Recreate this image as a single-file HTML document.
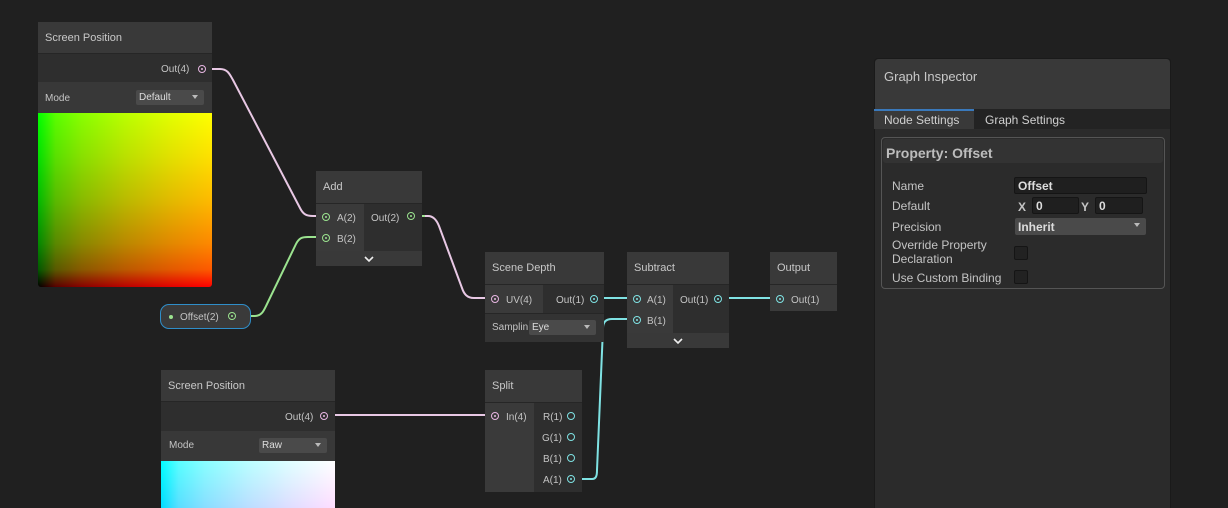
<!DOCTYPE html>
<html><head><style>
html{overflow:hidden}
body{margin:0;width:1228px;height:508px;background:#202020;overflow:hidden;position:relative;font-family:"Liberation Sans",sans-serif;font-size:11px;color:#c4c4c4}
.a{position:absolute;box-sizing:border-box}
.h{background:#393939;color:#c8c8c8;padding-left:7px;display:flex;align-items:center;font-size:11px}
.b{background:#2e2e2e}
.l{background:#3a3a3a}
.t{position:absolute;font-size:10px;color:#c4c4c4;white-space:nowrap;margin-top:1px}
.dd{position:absolute;background:#4a4a4a;border-radius:2px;font-size:10px;color:#ddd;padding-left:3px;box-sizing:border-box;line-height:14px}
.dd:after{content:"";position:absolute;right:6px;top:5px;border:3.5px solid transparent;border-top:4px solid #bbb}
.p{position:absolute;width:8px;height:8px;border-radius:50%;box-sizing:border-box;border:1.5px solid;margin-top:1px}
.p.f:after{content:"";position:absolute;left:1.5px;top:1.5px;width:2px;height:2px;border-radius:50%;background:currentColor}
.pk{border-color:#e7b6e2;color:#e7b6e2}.gr{border-color:#9be38f;color:#9be38f}.cy{border-color:#7fe2e3;color:#7fe2e3}
.chev{position:absolute;background:#393939}
.rx{background:linear-gradient(to right,#000 0%,#590000 10%,#880000 25%,#ba0000 50%,#e00000 75%,#f00 100%)}
.gy{background:linear-gradient(to top,#000 0%,#005900 10%,#008800 25%,#00ba00 50%,#00e000 75%,#0f0 100%);background-size:174px 174px;background-repeat:no-repeat;mix-blend-mode:screen}
.rxb{background:linear-gradient(to right,#0000ff 0%,#5900ff 10%,#8800ff 25%,#ba00ff 50%,#e000ff 75%,#f0f 100%)}
</style></head><body>
<svg class="a" style="left:0;top:0" width="1228" height="508">
<g fill="none" stroke-width="2">
<path d="M205 69 H220 C228 69 230 75 233 80 L300 208 C303 214 306 216 313 216 H320" stroke="#e8c8e4"/>
<path d="M250 316 H255 C262 316 264 310 267 304 L296 244 C299 238 302 237 308 237 H320" stroke="#9be38f"/>
<path d="M414 216 H428 C434 216 437 221 439 226 L462 288 C464 294 467 298 474 298 H490" stroke="#e8c8e4"/>
<path d="M414 216 H425" stroke="#9be38f"/>
<path d="M596 298 H632" stroke="#7fe2e3"/>
<path d="M720 298 H776" stroke="#7fe2e3"/>
<path d="M575 479 H592 C596 479 597 476 597 470 L603 328 C603 322 606 319 612 319 H632" stroke="#7fe2e3"/>
<path d="M327 415 H490" stroke="#e8c8e4"/>
</g></svg>

<!-- Screen Position 1 -->
<div class="a h" style="left:38px;top:22px;width:174px;height:31px">Screen Position</div>
<div class="a b" style="left:38px;top:53px;width:174px;height:29px;border-top:1px solid #262626"></div>
<div class="t" style="left:161px;top:63px">Out(4)</div>
<div class="p pk f" style="left:198px;top:64px"></div>
<div class="a" style="left:38px;top:82px;width:174px;height:31px;background:#383838"></div>
<div class="t" style="left:45px;top:92px">Mode</div>
<div class="dd" style="left:136px;top:90px;width:68px;height:15px;line-height:15px">Default</div>
<div class="a rx" style="left:38px;top:113px;width:174px;height:174px;border-radius:0 0 3px 3px;overflow:hidden">
<div class="a gy" style="left:0;top:0;width:174px;height:174px"></div></div>

<!-- Add -->
<div class="a h" style="left:316px;top:171px;width:106px;height:32px">Add</div>
<div class="a l" style="left:316px;top:203px;width:48px;height:48px;border-top:1px solid #262626"></div>
<div class="a b" style="left:364px;top:203px;width:58px;height:48px;border-top:1px solid #262626"></div>
<div class="p gr f" style="left:322px;top:212px"></div><div class="t" style="left:337px;top:212px">A(2)</div>
<div class="p gr f" style="left:322px;top:233px"></div><div class="t" style="left:337px;top:233px">B(2)</div>
<div class="t" style="left:371px;top:212px">Out(2)</div><div class="p gr f" style="left:407px;top:211px"></div>
<div class="chev" style="left:316px;top:251px;width:106px;height:15px"><svg width="106" height="15"><path d="M49 6 L53 10 L57 6" fill="none" stroke="#eee" stroke-width="1.6"/></svg></div>

<!-- Offset pill -->
<div class="a" style="left:160px;top:304px;width:91px;height:25px;border:1px solid #2f8ec9;border-radius:9px;background:#3a3a3a"></div>
<div class="a" style="left:169px;top:315px;width:4px;height:4px;border-radius:50%;background:#9be38f"></div>
<div class="t" style="left:180px;top:311px">Offset(2)</div>
<div class="p gr f" style="left:228px;top:311px"></div>

<!-- Scene Depth -->
<div class="a h" style="left:485px;top:252px;width:119px;height:32px">Scene Depth</div>
<div class="a l" style="left:485px;top:284px;width:58px;height:29px;border-top:1px solid #262626"></div>
<div class="a b" style="left:543px;top:284px;width:61px;height:29px;border-top:1px solid #262626"></div>
<div class="p pk f" style="left:491px;top:294px"></div><div class="t" style="left:506px;top:294px">UV(4)</div>
<div class="t" style="left:556px;top:294px">Out(1)</div><div class="p cy f" style="left:590px;top:294px"></div>
<div class="a" style="left:485px;top:313px;width:119px;height:29px;background:#333;border-top:1px solid #262626"></div>
<div class="t" style="left:492px;top:321px">Samplin</div>
<div class="dd" style="left:529px;top:320px;width:67px;height:15px;line-height:15px">Eye</div>

<!-- Subtract -->
<div class="a h" style="left:627px;top:252px;width:102px;height:32px">Subtract</div>
<div class="a l" style="left:627px;top:284px;width:46px;height:49px;border-top:1px solid #262626"></div>
<div class="a b" style="left:673px;top:284px;width:56px;height:49px;border-top:1px solid #262626"></div>
<div class="p cy f" style="left:633px;top:294px"></div><div class="t" style="left:647px;top:294px">A(1)</div>
<div class="p cy f" style="left:633px;top:315px"></div><div class="t" style="left:647px;top:315px">B(1)</div>
<div class="t" style="left:680px;top:294px">Out(1)</div><div class="p cy f" style="left:714px;top:294px"></div>
<div class="chev" style="left:627px;top:333px;width:102px;height:15px"><svg width="102" height="15"><path d="M47 6 L51 10 L55 6" fill="none" stroke="#eee" stroke-width="1.6"/></svg></div>

<!-- Output -->
<div class="a h" style="left:770px;top:252px;width:67px;height:32px">Output</div>
<div class="a l" style="left:770px;top:284px;width:67px;height:27px;border-top:1px solid #262626"></div>
<div class="p cy f" style="left:776px;top:294px"></div><div class="t" style="left:791px;top:294px">Out(1)</div>

<!-- Screen Position 2 -->
<div class="a h" style="left:161px;top:370px;width:174px;height:31px">Screen Position</div>
<div class="a b" style="left:161px;top:401px;width:174px;height:30px;border-top:1px solid #262626"></div>
<div class="t" style="left:285px;top:411px">Out(4)</div>
<div class="p pk f" style="left:320px;top:411px"></div>
<div class="a" style="left:161px;top:431px;width:174px;height:30px;background:#383838"></div>
<div class="t" style="left:169px;top:439px">Mode</div>
<div class="dd" style="left:259px;top:438px;width:68px;height:15px;line-height:15px">Raw</div>
<div class="a rxb" style="left:161px;top:461px;width:174px;height:47px">
<div class="a gy" style="left:0;top:0;width:174px;height:47px"></div></div>

<!-- Split -->
<div class="a h" style="left:485px;top:370px;width:97px;height:32px">Split</div>
<div class="a l" style="left:485px;top:402px;width:49px;height:90px;border-top:1px solid #262626"></div>
<div class="a b" style="left:534px;top:402px;width:48px;height:90px;border-top:1px solid #262626"></div>
<div class="p pk f" style="left:491px;top:411px"></div><div class="t" style="left:506px;top:411px">In(4)</div>
<div class="t" style="left:543px;top:411px">R(1)</div><div class="p cy" style="left:567px;top:411px"></div>
<div class="t" style="left:542px;top:432px">G(1)</div><div class="p cy" style="left:567px;top:432px"></div>
<div class="t" style="left:543px;top:453px">B(1)</div><div class="p cy" style="left:567px;top:453px"></div>
<div class="t" style="left:543px;top:474px">A(1)</div><div class="p cy f" style="left:567px;top:474px"></div>

<!-- Inspector -->
<div class="a" style="left:874px;top:58px;width:297px;height:450px;background:#2b2b2b;border:1px solid #1a1a1a;border-bottom:none;border-radius:4px 4px 0 0"></div>
<div class="a" style="left:875px;top:59px;width:295px;height:50px;background:#393939;border-radius:4px 4px 0 0"></div>
<div class="t" style="left:884px;top:68px;font-size:13px;color:#c8c8c8">Graph Inspector</div>
<div class="a" style="left:875px;top:109px;width:295px;height:20px;background:#232323"></div>
<div class="a" style="left:874px;top:109px;width:100px;height:20px;background:#393939;border-top:2px solid #3a79bb"></div>
<div class="t" style="left:884px;top:112px;font-size:12px;color:#d0d0d0">Node Settings</div>
<div class="t" style="left:985px;top:112px;font-size:12px;color:#d0d0d0">Graph Settings</div>
<div class="a" style="left:881px;top:137px;width:284px;height:152px;border:1px solid #555;border-radius:4px"></div>
<div class="a" style="left:883px;top:139px;width:280px;height:24px;background:#333;border-radius:3px"></div>
<div class="t" style="left:886px;top:144px;font-size:14px;font-weight:bold;color:#bdbdbd">Property: Offset</div>
<div class="t" style="left:892px;top:178px;font-size:12px">Name</div>
<div class="a" style="left:1014px;top:177px;width:133px;height:17px;background:#1f1f1f;border:1px solid #151515;border-radius:2px;font-size:12px;font-weight:bold;color:#ddd;padding-left:3px;line-height:17px">Offset</div>
<div class="t" style="left:892px;top:198px;font-size:12px">Default</div>
<div class="t" style="left:1018px;top:199px;font-size:12px;font-weight:bold">X</div>
<div class="a" style="left:1032px;top:197px;width:47px;height:17px;background:#1f1f1f;border:1px solid #151515;border-radius:2px;font-size:12px;font-weight:bold;color:#ddd;padding-left:3px;line-height:17px">0</div>
<div class="t" style="left:1081px;top:199px;font-size:12px;font-weight:bold">Y</div>
<div class="a" style="left:1095px;top:197px;width:48px;height:17px;background:#1f1f1f;border:1px solid #151515;border-radius:2px;font-size:12px;font-weight:bold;color:#ddd;padding-left:3px;line-height:17px">0</div>
<div class="t" style="left:892px;top:219px;font-size:12px">Precision</div>
<div class="dd" style="left:1015px;top:218px;width:131px;height:17px;font-size:12px;font-weight:bold;line-height:18px">Inherit</div>
<div class="t" style="left:892px;top:237px;font-size:12px;line-height:14px">Override Property<br>Declaration</div>
<div class="a" style="left:1014px;top:246px;width:14px;height:14px;background:#222;border:1px solid #151515;border-radius:2px"></div>
<div class="t" style="left:892px;top:270px;font-size:12px">Use Custom Binding</div>
<div class="a" style="left:1014px;top:270px;width:14px;height:14px;background:#222;border:1px solid #151515;border-radius:2px"></div>
</body></html>
